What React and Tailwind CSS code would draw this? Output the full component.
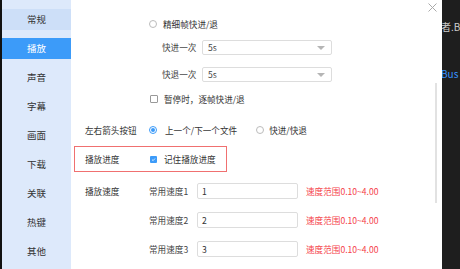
import React from "react";

const font = { fontFamily: '"Noto Sans CJK SC", "Noto Sans", sans-serif' };

const navItems = ["常规", "播放", "声音", "字幕", "画面", "下载", "关联", "热键", "其他"];

const Radio = ({ checked }) => (
  <span
    className={
      "w-[8px] h-[8px] rounded-full border flex items-center justify-center shrink-0 bg-white " +
      (checked ? "border-[#3c9bf9]" : "border-[#bbbbbb]")
    }
  >
    {checked && <span className="w-[4px] h-[4px] rounded-full bg-[#3c9bf9]" />}
  </span>
);

const Checkbox = ({ checked }) =>
  checked ? (
    <span className="w-[7px] h-[7px] rounded-[1px] bg-[#3c9bf9] flex items-center justify-center shrink-0">
      <svg width="5" height="5" viewBox="0 0 10 10">
        <path d="M2 5.2 L4.2 7.3 L8 3" stroke="white" strokeWidth="1.5" fill="none" />
      </svg>
    </span>
  ) : (
    <span className="w-[8px] h-[8px] rounded-[1px] border border-[#999999] bg-white shrink-0" />
  );

const Select = ({ value }) => (
  <div className="w-[130px] h-[15px] border border-[#dddddd] rounded-[2px] flex items-center justify-between pl-[5px] pr-[6px]">
    <span className="text-[#444444]">{value}</span>
    <svg width="8" height="4" viewBox="0 0 8 4">
      <path d="M0 0 L8 0 L4 4 Z" fill="#b5b5b5" />
    </svg>
  </div>
);

const SpeedRow = ({ n, label, className }) => (
  <div className={"flex items-center h-[16px] " + className}>
    <span className="w-[64px] text-[#333333]">{label}</span>
    <span className="w-[48px] text-[#444444]">常用速度{n}</span>
    <div className="w-[101px] h-[16px] border border-[#dddddd] rounded-[2px] flex items-center pl-[4px] text-[#333333]">
      {n}
    </div>
    <span className="ml-[8px] text-[#f5424a]">速度范围0.10~4.00</span>
  </div>
);

export default function App() {
  return (
    <div className="w-[460px] h-[269px] flex overflow-hidden bg-white" style={font}>
      <div className="w-[2px] bg-[#111111]" />
      <div className="w-[69px] bg-[#dde9fb] flex flex-col pt-[9px] gap-[7.9px] text-[9.5px] text-[#333333]">
        {navItems.map((t, i) => (
          <div
            key={t}
            className={
              "h-[21px] flex items-center justify-center " +
              (i === 0 ? "bg-[#cddff8]" : i === 1 ? "bg-[#3c9bf9] text-white" : "")
            }
          >
            {t}
          </div>
        ))}
      </div>

      <div className="relative flex-1 bg-white text-[8.6px] leading-none pl-[14px]">
        <svg className="absolute left-[357px] top-[3px]" width="9" height="9" viewBox="0 0 9 9">
          <path d="M0.5 0.5 L8.5 8.5 M8.5 0.5 L0.5 8.5" stroke="#aaaaaa" strokeWidth="1" />
        </svg>
        <div className="absolute left-[364px] top-[83px] w-[2px] h-[120px] bg-[#e2e2e2]" />

        <div className="flex items-center h-[14px] mt-[17px] pl-[64px] gap-[6px] text-[#333333]">
          <Radio />
          <span>精细帧快进/退</span>
        </div>

        <div className="flex items-center h-[15px] mt-[9px] pl-[77px] text-[#444444]">
          <span className="w-[40px]">快进一次</span>
          <Select value="5s" />
        </div>
        <div className="flex items-center h-[15px] mt-[12px] pl-[77px] text-[#444444]">
          <span className="w-[40px]">快退一次</span>
          <Select value="5s" />
        </div>

        <div className="flex items-center h-[14px] mt-[10px] pl-[65px] gap-[6px] text-[#333333]">
          <Checkbox />
          <span>暂停时，逐帧快进/退</span>
        </div>

        <div className="flex items-center h-[14px] mt-[17px] text-[#333333]">
          <span className="w-[64px]">左右箭头按钮</span>
          <Radio checked />
          <span className="ml-[8px]">上一个/下一个文件</span>
          <span className="ml-[19px]">
            <Radio />
          </span>
          <span className="ml-[5px]">快进/快退</span>
        </div>

        <div className="flex items-center h-[26px] mt-[9px] ml-[-11px] w-[153px] border border-[#f07070] pl-[10px] text-[#333333]">
          <span className="w-[65px]">播放进度</span>
          <Checkbox checked />
          <span className="ml-[7px]">记住播放进度</span>
        </div>

        <SpeedRow n={1} label="播放速度" className="mt-[11px]" />
        <SpeedRow n={2} label="" className="mt-[13px]" />
        <SpeedRow n={3} label="" className="mt-[13px]" />
      </div>

      <div className="w-[18px] bg-[#1e1e1e] overflow-hidden whitespace-nowrap text-[10px] leading-none">
        <div className="mt-[22px] text-[#cccccc] ml-[-1px]">者.BI</div>
        <div className="mt-[37px] text-[#3794ff] ml-[-1px]">Bus</div>
      </div>
    </div>
  );
}
